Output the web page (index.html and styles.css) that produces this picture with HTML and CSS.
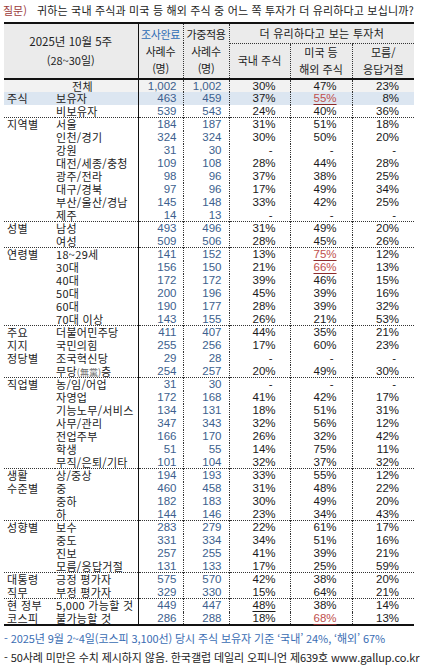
FILE: index.html
```html
<!DOCTYPE html>
<html lang="ko">
<head>
<meta charset="utf-8">
<link rel="stylesheet" href="styles.css">
</head>
<body>
<div class="page">
  <div class="title"><span class="q">질문)</span><span class="qt">귀하는 국내 주식과 미국 등 해외 주식 중 어느 쪽 투자가 더 유리하다고 보십니까?</span></div>
  <table class="tbl">
    <colgroup>
      <col class="c1"><col class="c2"><col class="c3"><col class="c4"><col class="c5"><col class="c6"><col class="c7">
    </colgroup>
    <thead>
      <tr class="h1">
        <th colspan="2" rowspan="2" class="hl"><div>2025년 10월 5주</div><div class="sub">(28~30일)</div></th>
        <th rowspan="2" class="hn dv"><div class="blue">조사완료</div><div>사례수</div><div>(명)</div></th>
        <th rowspan="2" class="hn dv"><div>가중적용</div><div>사례수</div><div>(명)</div></th>
        <th colspan="3" class="hg">더 유리하다고 보는 투자처</th>
      </tr>
      <tr class="h2">
        <th class="dv">국내 주식</th>
        <th class="dv"><div>미국 등</div><div>해외 주식</div></th>
        <th><div>모름/</div><div>응답거절</div></th>
      </tr>
    </thead>
    <tbody>
      <tr class="tot"><td></td><td class="lbc">전체</td><td class="n">1,002</td><td class="n2">1,002</td><td class="p">30%</td><td class="p">47%</td><td class="p">23%</td></tr>
      <tr class="own"><td class="cat">주식</td><td class="lb">보유자</td><td class="n">463</td><td class="n2">459</td><td class="p">37%</td><td class="p"><span class="red">55%</span></td><td class="p">8%</td></tr>
      <tr><td></td><td class="lb">비보유자</td><td class="n">539</td><td class="n2">543</td><td class="p">24%</td><td class="p">40%</td><td class="p">36%</td></tr>

      <tr class="gs"><td class="cat">지역별</td><td class="lb">서울</td><td class="n">184</td><td class="n2">187</td><td class="p">31%</td><td class="p">51%</td><td class="p">18%</td></tr>
      <tr><td></td><td class="lb">인천/경기</td><td class="n">324</td><td class="n2">324</td><td class="p">30%</td><td class="p">50%</td><td class="p">20%</td></tr>
      <tr><td></td><td class="lb">강원</td><td class="n">31</td><td class="n2">30</td><td class="p d">-</td><td class="p d">-</td><td class="p d">-</td></tr>
      <tr><td></td><td class="lb">대전/세종/충청</td><td class="n">109</td><td class="n2">108</td><td class="p">28%</td><td class="p">44%</td><td class="p">28%</td></tr>
      <tr><td></td><td class="lb">광주/전라</td><td class="n">98</td><td class="n2">96</td><td class="p">37%</td><td class="p">38%</td><td class="p">25%</td></tr>
      <tr><td></td><td class="lb">대구/경북</td><td class="n">97</td><td class="n2">96</td><td class="p">17%</td><td class="p">49%</td><td class="p">34%</td></tr>
      <tr><td></td><td class="lb">부산/울산/경남</td><td class="n">145</td><td class="n2">148</td><td class="p">33%</td><td class="p">42%</td><td class="p">25%</td></tr>
      <tr><td></td><td class="lb">제주</td><td class="n">14</td><td class="n2">13</td><td class="p d">-</td><td class="p d">-</td><td class="p d">-</td></tr>

      <tr class="gs"><td class="cat">성별</td><td class="lb">남성</td><td class="n">493</td><td class="n2">496</td><td class="p">31%</td><td class="p">49%</td><td class="p">20%</td></tr>
      <tr><td></td><td class="lb">여성</td><td class="n">509</td><td class="n2">506</td><td class="p">28%</td><td class="p">45%</td><td class="p">26%</td></tr>

      <tr class="gs"><td class="cat">연령별</td><td class="lb">18~29세</td><td class="n">141</td><td class="n2">152</td><td class="p">13%</td><td class="p"><span class="red">75%</span></td><td class="p">12%</td></tr>
      <tr><td></td><td class="lb">30대</td><td class="n">156</td><td class="n2">150</td><td class="p">21%</td><td class="p"><span class="red">66%</span></td><td class="p">13%</td></tr>
      <tr><td></td><td class="lb">40대</td><td class="n">172</td><td class="n2">172</td><td class="p">39%</td><td class="p">46%</td><td class="p">15%</td></tr>
      <tr><td></td><td class="lb">50대</td><td class="n">200</td><td class="n2">196</td><td class="p">45%</td><td class="p">39%</td><td class="p">16%</td></tr>
      <tr><td></td><td class="lb">60대</td><td class="n">190</td><td class="n2">177</td><td class="p">28%</td><td class="p">39%</td><td class="p">32%</td></tr>
      <tr><td></td><td class="lb">70대 이상</td><td class="n">143</td><td class="n2">155</td><td class="p">26%</td><td class="p">21%</td><td class="p">53%</td></tr>

      <tr class="gs"><td class="cat">주요</td><td class="lb">더불어민주당</td><td class="n">411</td><td class="n2">407</td><td class="p">44%</td><td class="p">35%</td><td class="p">21%</td></tr>
      <tr><td class="cat">지지</td><td class="lb">국민의힘</td><td class="n">255</td><td class="n2">256</td><td class="p">17%</td><td class="p">60%</td><td class="p">23%</td></tr>
      <tr><td class="cat">정당별</td><td class="lb">조국혁신당</td><td class="n">29</td><td class="n2">28</td><td class="p d">-</td><td class="p d">-</td><td class="p d">-</td></tr>
      <tr><td></td><td class="lb">무당<span class="hj">(無黨)</span>층</td><td class="n">254</td><td class="n2">257</td><td class="p">20%</td><td class="p">49%</td><td class="p">30%</td></tr>

      <tr class="gs"><td class="cat">직업별</td><td class="lb">농/임/어업</td><td class="n">31</td><td class="n2">30</td><td class="p d">-</td><td class="p d">-</td><td class="p d">-</td></tr>
      <tr><td></td><td class="lb">자영업</td><td class="n">172</td><td class="n2">168</td><td class="p">41%</td><td class="p">42%</td><td class="p">17%</td></tr>
      <tr><td></td><td class="lb">기능노무/서비스</td><td class="n">134</td><td class="n2">131</td><td class="p">18%</td><td class="p">51%</td><td class="p">31%</td></tr>
      <tr><td></td><td class="lb">사무/관리</td><td class="n">347</td><td class="n2">343</td><td class="p">32%</td><td class="p">56%</td><td class="p">12%</td></tr>
      <tr><td></td><td class="lb">전업주부</td><td class="n">166</td><td class="n2">170</td><td class="p">26%</td><td class="p">32%</td><td class="p">42%</td></tr>
      <tr><td></td><td class="lb">학생</td><td class="n">51</td><td class="n2">55</td><td class="p">14%</td><td class="p">75%</td><td class="p">11%</td></tr>
      <tr><td></td><td class="lb">무직/은퇴/기타</td><td class="n">101</td><td class="n2">104</td><td class="p">32%</td><td class="p">37%</td><td class="p">32%</td></tr>

      <tr class="gs"><td class="cat">생활</td><td class="lb">상/중상</td><td class="n">194</td><td class="n2">193</td><td class="p">33%</td><td class="p">55%</td><td class="p">12%</td></tr>
      <tr><td class="cat">수준별</td><td class="lb">중</td><td class="n">460</td><td class="n2">458</td><td class="p">31%</td><td class="p">48%</td><td class="p">22%</td></tr>
      <tr><td></td><td class="lb">중하</td><td class="n">182</td><td class="n2">183</td><td class="p">30%</td><td class="p">49%</td><td class="p">20%</td></tr>
      <tr><td></td><td class="lb">하</td><td class="n">144</td><td class="n2">146</td><td class="p">23%</td><td class="p">34%</td><td class="p">43%</td></tr>

      <tr class="gs"><td class="cat">성향별</td><td class="lb">보수</td><td class="n">283</td><td class="n2">279</td><td class="p">22%</td><td class="p">61%</td><td class="p">17%</td></tr>
      <tr><td></td><td class="lb">중도</td><td class="n">331</td><td class="n2">334</td><td class="p">34%</td><td class="p">51%</td><td class="p">16%</td></tr>
      <tr><td></td><td class="lb">진보</td><td class="n">257</td><td class="n2">255</td><td class="p">41%</td><td class="p">39%</td><td class="p">21%</td></tr>
      <tr><td></td><td class="lb">모름/응답거절</td><td class="n">131</td><td class="n2">133</td><td class="p">17%</td><td class="p">25%</td><td class="p">59%</td></tr>

      <tr class="gs"><td class="cat">대통령</td><td class="lb">긍정 평가자</td><td class="n">575</td><td class="n2">570</td><td class="p">42%</td><td class="p">38%</td><td class="p">20%</td></tr>
      <tr><td class="cat">직무</td><td class="lb">부정 평가자</td><td class="n">329</td><td class="n2">330</td><td class="p">15%</td><td class="p">64%</td><td class="p">21%</td></tr>

      <tr class="gs"><td class="cat">현 정부</td><td class="lb">5,000 가능할 것</td><td class="n">449</td><td class="n2">447</td><td class="p"><span class="ul">48%</span></td><td class="p">38%</td><td class="p">14%</td></tr>
      <tr class="last"><td class="cat">코스피</td><td class="lb">불가능할 것</td><td class="n">286</td><td class="n2">288</td><td class="p">18%</td><td class="p"><span class="red">68%</span></td><td class="p">13%</td></tr>
    </tbody>
  </table>
  <div class="notes">
    <div class="note blue">- 2025년 9월 2~4일(코스피 3,100선) 당시 주식 보유자 기준 ‘국내’ 24%, ‘해외’ 67%</div>
    <div class="note">- 50사례 미만은 수치 제시하지 않음. 한국갤럽 데일리 오피니언 제639호 www.gallup.co.kr</div>
  </div>
</div>
</body>
</html>
```
FILE: styles.css
```css
html, body {
  margin: 0;
  padding: 0;
  background: #fff;
}
body {
  font-family: "Noto Sans CJK KR", "Noto Sans", sans-serif;
  color: #111;
  width: 432px;
}
.page {
  padding: 0 0 0 4px;
}
.title {
  height: 22px;
  display: flex;
  align-items: center;
  font-size: 11px;
  line-height: 14px;
  margin-left: -1px;
  padding-bottom: 2px;
  box-sizing: border-box;
}
.title .q {
  color: #9c3b3b;
  width: 34px;
}
.title .qt {
  color: #222;
  letter-spacing: 0.17px;
}
.tbl {
  border-collapse: collapse;
  table-layout: fixed;
  width: 410px;
  font-size: 11px;
}
.c1 { width: 51px; }
.c2 { width: 83px; }
.c3 { width: 45px; }
.c4 { width: 46px; }
.c5 { width: 61px; }
.c6 { width: 62px; }
.c7 { width: 62px; }

thead th {
  background: #ebebeb;
  font-weight: normal;
  color: #222;
  padding: 0;
  line-height: 17px;
  text-align: center;
  vertical-align: middle;
}
thead tr.h1 th {
  border-top: 2px solid #111;
}
thead tr.h1 { height: 20px; }
thead tr.h2 { height: 33px; }
thead tr.h2 th {
  border-bottom: 2px solid #111;
}
thead th.hl {
  border-bottom: 2px solid #111;
  border-right: 1px solid #111;
  font-size: 11.5px;
  line-height: 19px;
}
thead th.hl .sub { font-size: 11px; }
thead th.hn {
  border-bottom: 2px solid #111;
  line-height: 17px;
  font-size: 11px;
  letter-spacing: -0.3px;
  padding-top: 1px;
}
thead th.hg {
  border-bottom: 1px dotted #333;
  letter-spacing: 0.3px;
}
th.dv, td.dv { border-right: 1px dotted #333; }
.blue { color: #2f6db5; }

tbody tr { height: 13px; }
tbody td {
  height: 13px;
  line-height: 12px;
  padding: 0;
  white-space: nowrap;
  box-sizing: border-box;
}
tbody td:nth-child(2) { border-right: 1px solid #111; }
tbody td:nth-child(3),
tbody td:nth-child(4),
tbody td:nth-child(5),
tbody td:nth-child(6) { border-right: 1px dotted #333; }

tbody tr.gs td { border-top: 1px dotted #333; }
tbody tr.last td { border-bottom: 2px solid #111; }

.tot td { background: #f2f2f2; }
.own td { background: #dce6f1; }

.cat {
  padding-left: 3px;
  letter-spacing: 0.4px;
  color: #222;
}
.lb, .lbc {
  padding-left: 1px;
  letter-spacing: 0.3px;
  color: #222;
}
.lbc { padding-left: 17px; }
.hj {
  font-size: 9px;
  line-height: 9px;
  color: #666;
  letter-spacing: 0;
}
.n, .n2, .p {
  font-family: "Liberation Sans", Arial, sans-serif;
  font-size: 11.5px;
  text-align: right;
}
.n { color: #3d5f8e; padding-right: 6px; }
.n2 { color: #3d5f8e; padding-right: 7px; }
.p { color: #1a1a1a; padding-right: 14px; }
td.p:nth-child(6), td.p:nth-child(7) { padding-right: 15px; }
.p.d { padding-right: 17px; }
td.p.d:nth-child(6), td.p.d:nth-child(7) { padding-right: 18px; }
.red {
  color: #c0504d;
  text-decoration: underline;
  text-decoration-color: #8b2a2a;
  text-underline-offset: 2px;
}
.ul {
  text-decoration: underline;
  text-underline-offset: 2px;
}
.notes {
  padding-top: 3px;
  font-size: 11px;
}
.note {
  line-height: 19px;
  letter-spacing: -0.1px;
  white-space: nowrap;
  color: #222;
}
.note.blue { color: #3a6db3; }
```
